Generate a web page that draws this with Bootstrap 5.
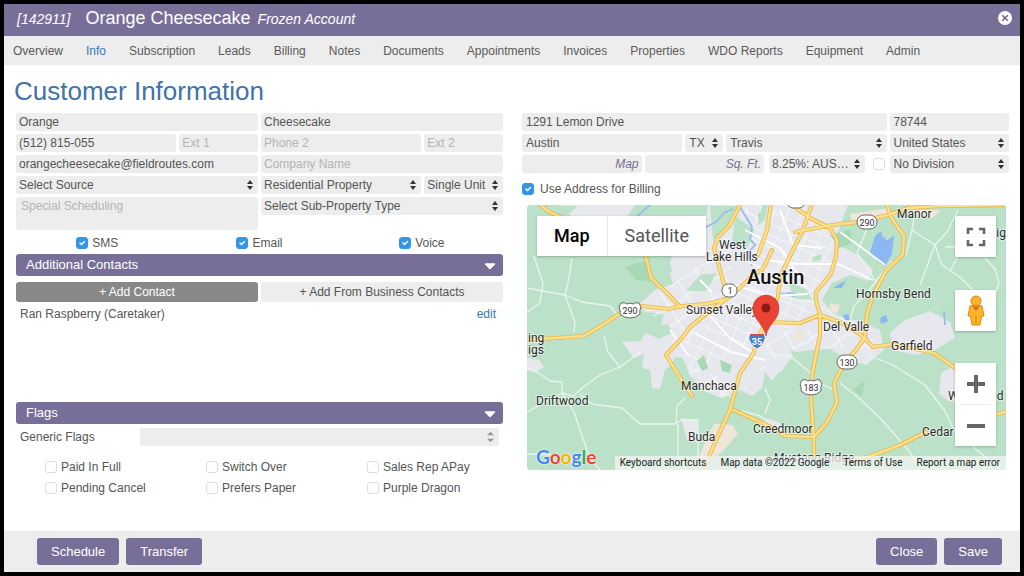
<!DOCTYPE html>
<html lang="en">
<head>
<meta charset="utf-8">
<meta name="viewport" content="width=device-width, initial-scale=1">
<title>Orange Cheesecake - Customer Information</title>
<link href="https://cdn.jsdelivr.net/npm/bootstrap@5.3.0/dist/css/bootstrap.min.css" rel="stylesheet">
<style>
  :root { --brand: #786f99; --field: #ededed; --ink: #555; }
  body { font-family: "Liberation Sans", Arial, sans-serif; font-size: 12px; line-height: 18px; color: var(--ink); }
  .app-window { border: 4px solid #000; background: #fff; }
  .title-bar { background: var(--brand); height: 32px; padding: 0 8px 4px 13px; }
  .title-bar h1 { font-size: 18px; line-height: 28px; gap: 0 7px; }
  .title-bar em { font-size: 14px; font-weight: 400; }
  .title-bar .acct-name { margin-left: 8px; }
  .close-x { width: 14px; height: 14px; line-height: 0; }
  .tabs-bar { background: var(--field); height: 29px; padding: 0 9px; }
  .tabs-bar .nav { gap: 0 23px; }
  .tabs-bar .nav-link { padding: 0; color: #5a5a5a; }
  .tabs-bar .nav-link.active { color: #337ab7; }
  .page-title { font-size: 26px; line-height: 30px; font-weight: 400; color: #4173a8; margin: 0 0 7px -2px; }
  main { padding: 11px 11px 0 12px; }
  .two-up { display: grid; grid-template-columns: 1fr 1fr; column-gap: 19px; }
  .grid-6, .grid-12 { display: grid; gap: 3px; }
  .grid-6 { grid-template-columns: repeat(6, minmax(0, 1fr)); }
  .grid-12 { grid-template-columns: repeat(12, minmax(0, 1fr)); }
  .s1 { grid-column: span 1; } .s2 { grid-column: span 2; } .s3 { grid-column: span 3; }
  .s4 { grid-column: span 4; } .s9 { grid-column: span 9; }
  .fld.form-control, .fld.form-select {
    background-color: var(--field); border: 0; border-radius: 3px; font-size: 12px; line-height: 18px;
    min-height: 0; height: 18px; padding: 0 3px; color: var(--ink); box-shadow: none;
  }
  .grid-12 .fld.form-control, .grid-12 > .fld.form-select { padding-left: 4px; }
  .fld.form-select {
    padding-right: 12px; background-position: right 5px center; background-size: 6px 10px;
    background-image: url("data:image/svg+xml,%3Csvg xmlns='http://www.w3.org/2000/svg' viewBox='0 0 6 10'%3E%3Cpath fill='%23333' d='M3 0l3 4H0zM3 10L0 6h6z'/%3E%3C/svg%3E");
  }
  .fld.flags-select {
    background-image: url("data:image/svg+xml,%3Csvg xmlns='http://www.w3.org/2000/svg' viewBox='0 0 8 12'%3E%3Cpath fill='%23999' d='M4 0l4 4H0zM4 12L0 8h8z'/%3E%3C/svg%3E");
    background-size: 7px 12px; border-radius: 1px; width: auto;
  }
  .fld::placeholder { color: #b4b4b4; opacity: 1; }
  .fld.hint-link { text-align: right; }
  .fld.hint-link::placeholder { color: var(--brand); font-style: italic; }
  .fld.note { height: 33px; resize: none; padding: 0 5px; grid-row: span 2; }
  .tick.form-check-input { width: 12px; height: 12px; margin: 0; border: 1px solid #ddd; border-radius: 3px; flex: none; float: none; box-shadow: none; }
  .tick.form-check-input:checked { background-color: #3595e3; border-color: #3595e3; }
  .opt { display: inline-flex; align-items: center; gap: 4px; }
  .reach { margin: 4px 0 2px; }
  .tax-cell { padding: 0 2px; gap: 8px; }
  .bill-opt { display: flex; align-items: center; gap: 6px; margin-top: 7px; }
  .panel-head { background: var(--brand); color: #fff; border: 0; border-radius: 3px; height: 22px; padding: 0 7px 0 10px; font-size: 13px; line-height: 22px; width: 100%; }
  .panel-head svg { margin-top: 3px; }
  .add-row { gap: 3px; margin-top: 6px; }
  .add-btn { flex: 1 1 0; border: 0; border-radius: 3px; background: var(--field); color: var(--ink); font-size: 12px; line-height: 20px; padding: 0; }
  .add-btn.primary { background: #888; color: #fff; }
  .contact-list { min-height: 96px; padding: 3px 7px 0 4px; }
  .contact-list a { color: #337ab7; }
  .flag-grid { display: grid; grid-template-columns: repeat(3, 1fr); row-gap: 3px; padding: 12px 4px 0 0; }
  .flag-grid .opt { padding-left: 29px; }
  .action-bar { background: var(--field); padding: 7px 18px 7px 33px; }
  .act-group { gap: 7px; }
  .btn.act { background: var(--brand); color: #fff; font-size: 13px; line-height: 27px; padding: 0 14px; border: 0; border-radius: 3px; }

  .map-box { height: 265px; margin: 7px 3px 0 5px; border-radius: 4px; overflow: hidden; font-family: Roboto, Arial, sans-serif; background: #bbe2c8; }
  .map-art { display: block; width: 100%; height: 100%; }
  .map-art text { font-family: Roboto, Arial, sans-serif; font-size: 12px; fill: #2c2c2c; stroke: #fff; stroke-opacity: .5; stroke-width: 2px; paint-order: stroke; }
  .map-art .shield-no { font-size: 9px; stroke: none; }
  .map-ctl { position: absolute; background: #fff; border-radius: 1px; box-shadow: 0 1px 3px rgba(0,0,0,.25); }
  .map-ctl button, .map-ctl.sq { border: 0; background: #fff; padding: 0; }
  .map-type { left: 10px; top: 11px; height: 40px; }
  .map-type button { font-size: 18px; line-height: 40px; padding: 0 17px; color: #565656; }
  .map-type button.on { color: #000; font-weight: 500; border-right: 1px solid #e8e8e8; }
  .sq { right: 10px; width: 41px; height: 41px; }
  .full { top: 11px; } .peg { top: 85px; }
  .zoom-ctl { right: 10px; top: 158px; width: 41px; }
  .zoom-ctl button { height: 41px; width: 41px; }
  .zoom-ctl hr { margin: 0 5px; border-color: #bbb; }
  .map-logo { position: absolute; left: 9px; bottom: 1px; font-family: Lato, sans-serif; font-size: 19px; line-height: 24px; font-weight: 700; text-shadow: 0 0 2px #fff, 0 0 1px #fff; }
  .map-legal { position: absolute; right: 0; bottom: 0; background: rgba(245,245,245,.72); font-size: 10px; line-height: 14px; padding: 0 6px 0 5px; gap: 14px; }
  .map-legal a, .map-legal button { color: #222; font-size: 10px; line-height: 14px; padding: 0; border: 0; background: none; text-decoration: none; }
</style>
</head>
<body>
<div class="app-window d-flex flex-column min-vh-100">
  <header class="title-bar d-flex align-items-center text-white">
    <h1 class="mb-0 fw-normal d-flex align-items-baseline"><em>[142911]</em><span class="acct-name">Orange Cheesecake</span><em>Frozen Account</em></h1>
    <button type="button" class="close-x ms-auto p-0 border-0 bg-transparent" aria-label="Close window">
      <svg width="14" height="14" viewBox="0 0 14 14"><circle cx="7" cy="7" r="7" fill="#fff"/><path d="M4.200 4.200l5.600 5.600M9.800 4.200l-5.600 5.600" stroke="#6a6288" stroke-width="1.500"/></svg>
    </button>
  </header>
  <nav class="tabs-bar d-flex align-items-center" aria-label="Account sections">
    <div class="nav">
      <a class="nav-link" href="#">Overview</a><a class="nav-link active" href="#" aria-current="page">Info</a><a class="nav-link" href="#">Subscription</a><a class="nav-link" href="#">Leads</a><a class="nav-link" href="#">Billing</a><a class="nav-link" href="#">Notes</a><a class="nav-link" href="#">Documents</a><a class="nav-link" href="#">Appointments</a><a class="nav-link" href="#">Invoices</a><a class="nav-link" href="#">Properties</a><a class="nav-link" href="#">WDO Reports</a><a class="nav-link" href="#">Equipment</a><a class="nav-link" href="#">Admin</a>
    </div>
  </nav>

  <main class="flex-grow-1">
    <h2 class="page-title">Customer Information</h2>
    <div class="two-up">
      <section aria-label="Contact details">
        <div class="grid-6">
          <input class="form-control fld s3" aria-label="First name" value="Orange">
          <input class="form-control fld s3" aria-label="Last name" value="Cheesecake">
          <input class="form-control fld s2" aria-label="Phone 1" value="(512) 815-055">
          <input class="form-control fld s1" aria-label="Extension 1" placeholder="Ext 1">
          <input class="form-control fld s2" aria-label="Phone 2" placeholder="Phone 2">
          <input class="form-control fld s1" aria-label="Extension 2" placeholder="Ext 2">
          <input class="form-control fld s3" aria-label="Email address" value="orangecheesecake@fieldroutes.com">
          <input class="form-control fld s3" aria-label="Company name" placeholder="Company Name">
          <select class="form-select fld s3" aria-label="Source"><option>Select Source</option></select>
          <select class="form-select fld s2" aria-label="Property type"><option>Residential Property</option></select>
          <select class="form-select fld s1" aria-label="Unit type"><option>Single Unit</option></select>
          <textarea class="form-control fld note s3" aria-label="Special scheduling" placeholder="Special Scheduling"></textarea>
          <select class="form-select fld s3" aria-label="Sub-property type"><option>Select Sub-Property Type</option></select>
        </div>
        <div class="reach d-flex">
          <div class="w-100 d-flex justify-content-center"><label class="opt"><input type="checkbox" class="form-check-input tick" checked>SMS</label></div>
          <div class="w-100 d-flex justify-content-center"><label class="opt"><input type="checkbox" class="form-check-input tick" checked>Email</label></div>
          <div class="w-100 d-flex justify-content-center"><label class="opt"><input type="checkbox" class="form-check-input tick" checked>Voice</label></div>
        </div>
        <button type="button" class="panel-head d-flex align-items-center justify-content-between">Additional Contacts
          <svg width="12" height="7" viewBox="0 0 12 7"><path d="M1.500 1h9L6 5.500z" fill="#fff" stroke="#fff" stroke-width="1.500" stroke-linejoin="round"/></svg></button>
        <div class="add-row d-flex">
          <button type="button" class="add-btn primary">+ Add Contact</button>
          <button type="button" class="add-btn">+ Add From Business Contacts</button>
        </div>
        <div class="contact-list d-flex justify-content-between align-items-start">
          <span>Ran Raspberry (Caretaker)</span><a href="#" class="text-decoration-none">edit</a>
        </div>
        <button type="button" class="panel-head d-flex align-items-center justify-content-between mt-1">Flags
          <svg width="12" height="7" viewBox="0 0 12 7"><path d="M1.500 1h9L6 5.500z" fill="#fff" stroke="#fff" stroke-width="1.500" stroke-linejoin="round"/></svg></button>
        <div class="row g-0 align-items-center mt-1 ps-1 pe-1">
          <label class="col-3" for="generic-flags">Generic Flags</label>
          <select id="generic-flags" class="form-select fld flags-select col"><option></option></select>
        </div>
        <div class="flag-grid">
          <label class="opt"><input type="checkbox" class="form-check-input tick">Paid In Full</label>
          <label class="opt"><input type="checkbox" class="form-check-input tick">Switch Over</label>
          <label class="opt"><input type="checkbox" class="form-check-input tick">Sales Rep APay</label>
          <label class="opt"><input type="checkbox" class="form-check-input tick">Pending Cancel</label>
          <label class="opt"><input type="checkbox" class="form-check-input tick">Prefers Paper</label>
          <label class="opt"><input type="checkbox" class="form-check-input tick">Purple Dragon</label>
        </div>
      </section>

      <section aria-label="Address">
        <div class="grid-12">
          <input class="form-control fld s9" aria-label="Street" value="1291 Lemon Drive">
          <input class="form-control fld s3" aria-label="Zip code" value="78744">
          <input class="form-control fld s4" aria-label="City" value="Austin">
          <select class="form-select fld s1" aria-label="State"><option>TX</option></select>
          <select class="form-select fld s4" aria-label="County"><option>Travis</option></select>
          <select class="form-select fld s3" aria-label="Country"><option>United States</option></select>
          <input class="form-control fld hint-link s3" aria-label="Map code" placeholder="Map">
          <input class="form-control fld hint-link s3" aria-label="Square feet" placeholder="Sq. Ft.">
          <div class="tax-cell s3 d-flex align-items-center">
            <select class="form-select fld flex-fill" aria-label="Tax rate"><option>8.25%: AUS…</option></select>
            <input type="checkbox" class="form-check-input tick" aria-label="Override tax rate">
          </div>
          <select class="form-select fld s3" aria-label="Division"><option>No Division</option></select>
        </div>
        <label class="bill-opt"><input type="checkbox" class="form-check-input tick" checked>Use Address for Billing</label>

        <div class="map-box position-relative">
          <svg class="map-art" viewBox="527 205 479 265" preserveAspectRatio="xMidYMid slice" role="img" aria-label="Map of Austin">
            <defs>
              <pattern id="streets" width="13" height="11" patternUnits="userSpaceOnUse" patternTransform="rotate(24)"><path d="M0 0H13M0 0V11" stroke="#fff" stroke-width="1.300" fill="none"/></pattern>
              <pattern id="suburb" width="21" height="17" patternUnits="userSpaceOnUse" patternTransform="rotate(-32)"><path d="M0 4Q10 0 21 4M6 0V17" stroke="#fff" stroke-width="1" fill="none"/></pattern>
              <g id="us-shield"><path d="M-9-7Q-5-8-3-6 0-8 3-6 5-8 9-7L11-3Q9 1 10 4 6 8 0 8-6 8-10 4-9 1-11-3z" fill="#fff" stroke="#666" stroke-width="1"/></g>
            </defs>
            <rect x="527" y="205" width="479" height="265" fill="#bbe2c8"/>
            <!-- built-up land -->
            <g fill="#e7e8ee">
              <path d="M708 205H848L840 226 835 243 860 256 873 270 868 281 850 275 832 283 822 300 834 315 862 322 880 330 884 350 866 365 850 360 830 349 812 350 796 352 786 348 776 356 779 372 772 381 765 372 762 388 752 396 740 390 722 398 704 391 690 376 683 358 664 356 655 348 660 332 664 314 645 312 638 305 655 290 673 284 668 268 672 256 700 256z"/>
              <path d="M622 342 640 341 646 333 666 342 679 347 672 364 665 370 660 389 652 388 650 370 642 368 644 354 634 358z"/>
              <path d="M560 205h75l-8 12h-55z"/>
              <path d="M890 333 905 320 930 311 950 322 955 338 935 350 915 355 893 350z"/>
              <path d="M941 373 958 364 968 400 948 401 939 393z"/>
              <path d="M767 340 788 343 793 356 780 373 767 358zM681 418 697 420 699 442 687 440zM527 358l12 2 5 7-8 5-9-2zM765 418l14 4 4 10-18-1z"/>
            </g>
            <path d="M732 205H800L838 243 815 296 805 326 768 332 752 342 690 378 683 340 710 315 734 283 760 268z" fill="url(#streets)" opacity=".8"/>
            <path d="M645 305 673 284 712 256 730 230 733 283 706 318 684 342 690 378 722 398 755 388 770 332 862 325 880 350 830 348 785 350 740 390 680 355z" fill="url(#suburb)" opacity=".8"/>
            <g fill="#a8d9b6">
              <path d="M625 267 648 260 652 282 636 280zM830 235l20-6 3 14-14 5zM853 390l12-10-3 17zM697 361l7-6 4 13-6 3zM720 360l12 5-2 8-8-2zM758 214l6-4 1 10-6 2z"/>
            </g>
            <g fill="#bbe2c8">
              <path d="M530 206H578L566 216H530zM648 256L668 256 672 270 664 286 655 280zM686 291l14-16 17-2-11 18zM735 216l20 14-8 18-15-5zM710 206l28 0-7 22-18 12zM762 205l6 0-3 15-7 5zM789 282l18 8 5 10-19-1zM812 258l8-4 2 5-9 3zM650 328l18-4 4 9-14 6z"/>
            </g>
            <g fill="#efe6da"><path d="M714 424 733 425 738 434 722 452 707 463 698 459 706 440z"/><path d="M850 214l38-6 8 8-44 7zM905 210l36 0-8 8-22-4zM830 303l10 2-3 9-8-4zM797 329l8 4-3 9-8-4z"/></g>
            <!-- water -->
            <g fill="#8db7f2"><path d="M875 236 881 231 884 242 894 236 892 254 885 266 878 262 870 252zM833 288 841 283 846 281 842 288zM786 292 797 293 790 296zM843 315l5-1 3 6-6 0zM880 318l6-3 2 6-7 3zM880 240l5-3 2 7z"/></g>
            <path d="M636 217 650 205M704 228 716 222 724 213 733 209M740 207 752 227 750 239 755 245 748 253 752 266M778 293 795 296M944 311 945 325" fill="none" stroke="#97bcf0" stroke-width="1.800"/>
            <!-- local roads -->
            <g fill="none" stroke="#e9f5ec" stroke-width="1.300" stroke-linejoin="round">
              <path d="M534 256 543 284 540 303 527 312M527 288 565 295 582 302 610 306 618 316M572 258 568 283 565 295 575 322 574 332"/>
              <path d="M527 368 540 374 550 381 562 382 562 393 573 396 582 388 600 375 620 367 640 352M604 336 608 352 620 367M562 393 574 412 582 436 590 458 600 470M527 412 562 393M580 394 592 404 622 408 640 424 676 424 681 420 698 420 698 457M678 424V466M685 398l-8 8-1 18M527 454l30 1"/>
              <path d="M915 212 912 230 935 245 920 285M958 210 947 232 935 245 942 265 961 278 975 292M985 258 995 269 999 283 993 300M945 247l20-1M912 230l-6 25M960 253l-10 18"/>
              <path d="M868 355 893 365 925 385 945 411 954 430 1000 470M840 383 860 399 880 418 905 446 920 466M813 380 832 389M765 354l25 2 22 18M765 388l5 12-5 14"/>
              <path d="M742 411 760 416 773 426M775 296 812 302 848 322M892 261 870 289 854 306 845 337M722 392l12 6M872 217l-15 36 20 30"/>
            </g>
            <g fill="none" stroke="#fff" stroke-width="1.800">
              <path d="M767 260 798 264 838 264 873 280M745 230 780 248 806 287M735 285 770 296 808 294M780 210 793 245 822 248M840 232 865 250 885 265M737 256 767 271M695 333 730 352 765 360M711 317 730 338 752 352M670 330 689 356M700 280 712 292"/>
            </g>
            <!-- highways: casing, then fill -->
            <defs>
              <path id="highways" d="M524 340 555 338 584 336 604 324 622 312 642 306 668 309 682 306 706 304 727 299 742 286 752 276 763 269 772 250M645 253 651 278 668 294 680 307M537 202 548 211 562 218M740 205 729 226 718 237 714 248 720 270 724 284 729 297 706 314 690 327 682 338 666 355 681 379 692 396M812 204 803 230 788 260 780 278 778 297 768 316 760 334 753 354 740 373 730 410 717 438 704 468M771 204 767 230 758 255M790 204 812 219 830 228 837 240 836 256 831 274 816 292 816 300 820 315 820 335 812 375 811 402 814 438 814 456M795 232 832 225 858 222 888 215 908 208 940 206 1010 205M886 202 892 219 904 236 903 254 886 271 873 295 867 314 865 337 856 350 845 362 834 383 837 402 828 421 814 437 785 436 771 427 747 416 733 410M765 322 800 323 820 315 842 323 861 335 873 347 893 344 934 353 958 370 984 416 998 414 1008 411M926 432 898 446 868 457 840 462"/>
            </defs>
            <g fill="none" stroke-linejoin="round" stroke-linecap="round">
              <use href="#highways" stroke="#e8b750" stroke-width="4.200"/>
              <use href="#highways" stroke="#fbe08a" stroke-width="2.400"/>
            </g>
            <!-- route shields -->
            <use href="#us-shield" x="630" y="310"/><use href="#us-shield" x="811" y="387"/>
            <g fill="#fff" stroke="#666"><rect x="857" y="215" width="20" height="14" rx="7"/><rect x="837" y="355" width="20" height="14" rx="7"/><rect x="722" y="284" width="15" height="13" rx="6"/><rect x="787" y="196" width="18" height="12" rx="6"/></g>
            <path d="M749 335h16q1 4-1 7-2 5-7 7-5-2-7-7-2-3-1-7z" fill="#4a7fc4" stroke="#fff"/><path d="M750 334h14v2h-14z" fill="#c9504d"/>
            <g text-anchor="middle">
              <text class="shield-no" x="630" y="314">290</text><text class="shield-no" x="811" y="391">183</text><text class="shield-no" x="867" y="226">290</text><text class="shield-no" x="847" y="366">130</text><text class="shield-no" x="730" y="294">1</text>
              <text class="shield-no" x="757" y="345" style="fill:#fff;font-weight:700">35</text>
            </g>
            <text x="897" y="218">Manor</text><text x="1006" y="237" text-anchor="end">Littig</text>
            <text x="719" y="249">West</text><text x="706" y="261">Lake Hills</text>
            <text x="747" y="284" style="font-size:20px;font-weight:500;fill:#111">Austin</text>
            <text x="856" y="298">Hornsby Bend</text><text x="686" y="314">Sunset Valley</text><text x="823" y="331">Del Valle</text>
            <text x="891" y="350">Garfield</text><text x="528" y="342">ing</text><text x="528" y="354">igs</text>
            <text x="681" y="390">Manchaca</text><text x="536" y="405">Driftwood</text><text x="948" y="400">Wyldwood</text>
            <text x="753" y="433">Creedmoor</text><text x="688" y="441">Buda</text><text x="922" y="436">Cedar Creek</text><text x="774" y="462">Mustang Ridge</text>
            <!-- location pin -->
            <path d="M766 336C764 324 753 320 753 308A13 13 0 0 1 779 308C779 320 768 324 766 336z" fill="#ea4335" stroke="#c5352a" stroke-width=".6"/><circle cx="766" cy="308" r="4.500" fill="#8c1a11"/>
          </svg>

          <div class="map-ctl map-type d-flex"><button type="button" class="on">Map</button><button type="button">Satellite</button></div>
          <button type="button" class="map-ctl sq full" aria-label="Full screen"><svg width="20" height="20" viewBox="0 0 20 20"><path d="M2 7V2h5M13 2h5v5M18 13v5h-5M7 18H2v-5" fill="none" stroke="#666" stroke-width="2.600"/></svg></button>
          <button type="button" class="map-ctl sq peg" aria-label="Street View"><svg width="20" height="32" viewBox="0 0 20 32"><path d="M4 11Q10 8 16 11L18 21H15.500L14 30H6L4.500 21H2z" fill="#fbb526" stroke="#d98a13"/><circle cx="10" cy="6" r="5" fill="#fbb526" stroke="#d98a13"/><path d="M6 11l4 5 4-5q-4 1-8 0z" fill="#e0662b"/><path d="M10 20v10" stroke="#d98a13"/></svg></button>
          <div class="map-ctl zoom-ctl"><button type="button" class="d-block" aria-label="Zoom in"><svg width="20" height="20" viewBox="0 0 20 20"><path d="M10 1v18M1 10h18" stroke="#666" stroke-width="4"/></svg></button><hr><button type="button" class="d-block" aria-label="Zoom out"><svg width="20" height="20" viewBox="0 0 20 20"><path d="M1 10h18" stroke="#666" stroke-width="4"/></svg></button></div>
          <div class="map-logo"><span style="color:#4285f4">G</span><span style="color:#ea4335">o</span><span style="color:#f5b400">o</span><span style="color:#4285f4">g</span><span style="color:#34a853">l</span><span style="color:#ea4335">e</span></div>
          <div class="map-legal d-flex"><button type="button">Keyboard shortcuts</button><span class="text-dark">Map data ©2022 Google</span><a href="#">Terms of Use</a><a href="#">Report a map error</a></div>
        </div>
      </section>
    </div>
  </main>

  <footer class="action-bar d-flex justify-content-between">
    <div class="act-group d-flex"><button type="button" class="btn act">Schedule</button><button type="button" class="btn act">Transfer</button></div>
    <div class="act-group d-flex"><button type="button" class="btn act">Close</button><button type="button" class="btn act">Save</button></div>
  </footer>
</div>
<script src="https://cdn.jsdelivr.net/npm/bootstrap@5.3.0/dist/js/bootstrap.bundle.min.js"></script>
</body>
</html>
